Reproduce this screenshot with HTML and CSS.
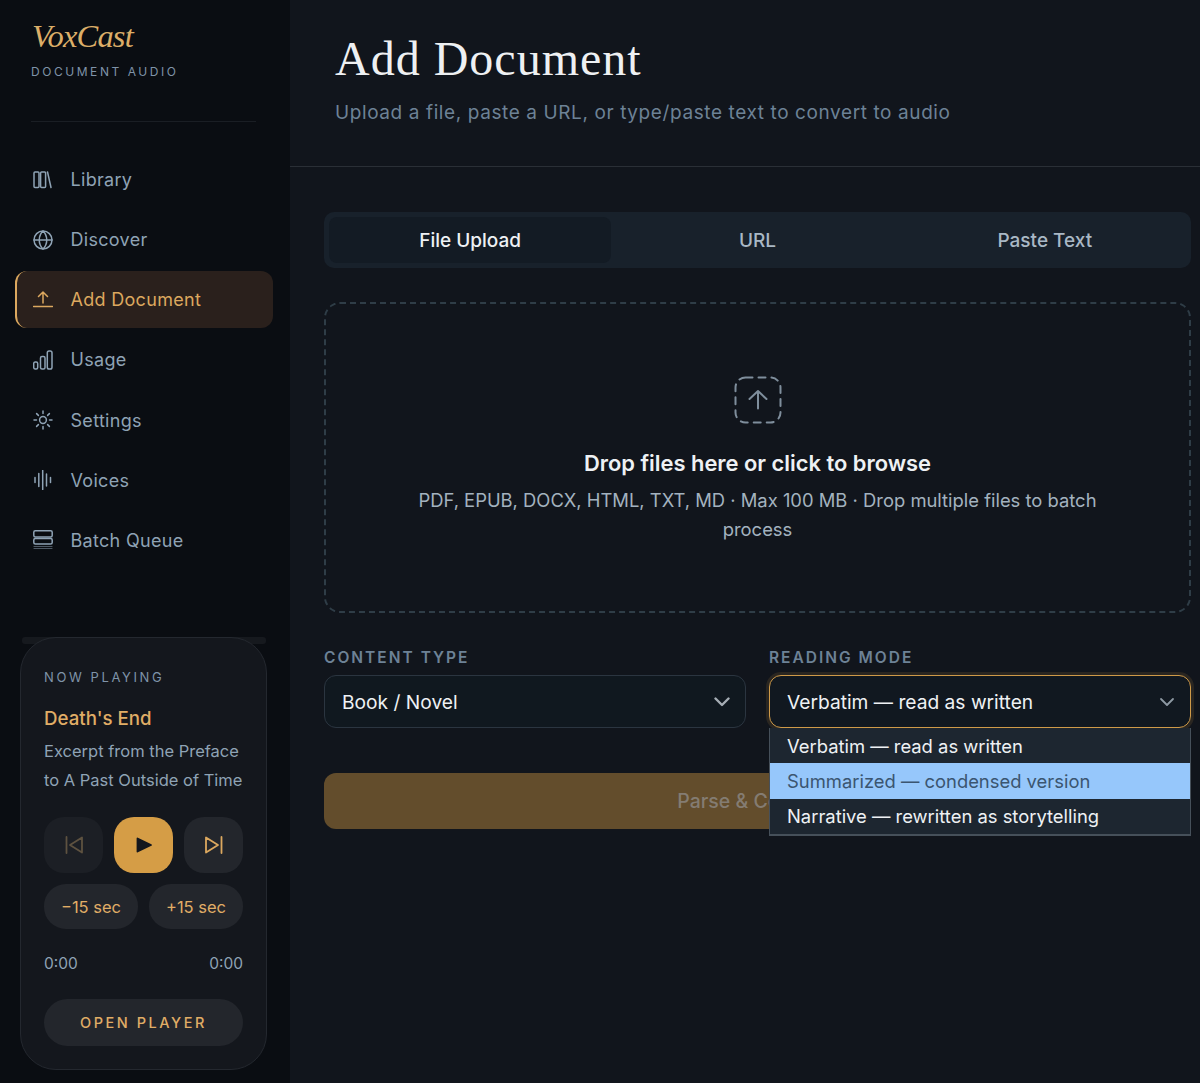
FILE: index.html
```html
<!DOCTYPE html>
<html lang="en">
<head>
<meta charset="utf-8">
<title>VoxCast</title>
<link rel="stylesheet" href="styles.css">
</head>
<body>
<div class="app">
  <aside class="sidebar">
    <div class="brand">
      <div class="logo">VoxCast</div>
      <div class="tagline">DOCUMENT AUDIO</div>
    </div>
    <nav class="nav">
      <a class="nav-item"><svg class="ico" viewBox="0 0 20 20"><rect x="1" y="2" width="5" height="15.5" rx="1"/><rect x="7.6" y="2" width="5" height="15.5" rx="1"/><path d="M14.5 2l3.5 15.5"/></svg><span>Library</span></a>
      <a class="nav-item"><svg class="ico" viewBox="0 0 20 20"><circle cx="10" cy="10" r="9"/><path d="M1 10h18M10 1c-5 5-5 13 0 18M10 1c5 5 5 13 0 18"/></svg><span>Discover</span></a>
      <a class="nav-item active"><svg class="ico" viewBox="0 0 20 20"><path d="M0.5 16.5h19M10 13V2M5.500 6.500L10 2l4.500 4.500"/></svg><span>Add Document</span></a>
      <a class="nav-item"><svg class="ico" viewBox="0 0 20 20"><rect x="0.700" y="12" width="4" height="7" rx="1.500"/><rect x="7.500" y="6.500" width="4.500" height="12.500" rx="1.500"/><rect x="14.300" y="1" width="4.700" height="18" rx="1.800"/></svg><span>Usage</span></a>
      <a class="nav-item"><svg class="ico" viewBox="0 0 20 20"><circle cx="10" cy="10" r="3.400"/><path d="M10 1v2.500M10 16.500V19M1 10h2.500M16.500 10H19M3.600 3.600l1.800 1.800M14.600 14.600l1.800 1.800M3.600 16.400l1.800-1.800M14.600 5.400l1.800-1.800"/></svg><span>Settings</span></a>
      <a class="nav-item"><svg class="ico" viewBox="0 0 20 20"><path d="M2 7.500v5M5.800 3.500v13M9.700 0.500v19M13.500 4v12M17.500 7.500v5"/></svg><span>Voices</span></a>
      <a class="nav-item"><svg class="ico" viewBox="0 0 20 20"><rect x="0.800" y="0.800" width="18.400" height="6.200" rx="1.500"/><rect x="0.800" y="8.500" width="18.400" height="5.500" rx="1.500"/><path class="faint" d="M1 16.500h18M1 18.500h18"/></svg><span>Batch Queue</span></a>
    </nav>
    <div class="player">
      <div class="np-label">NOW PLAYING</div>
      <div class="np-title">Death's End</div>
      <div class="np-sub">Excerpt from the Preface to A Past Outside of Time</div>
      <div class="transport">
        <button class="t-btn dim"><svg class="t-ico" viewBox="0 0 20 20"><path d="M2.500 2v16M18 2.500v15L6 10z"/></svg></button>
        <button class="t-btn play"><svg class="t-ico" viewBox="0 0 20 20"><path class="solid" d="M3.500 3.500l13.500 6.500-13.500 6.500z"/></svg></button>
        <button class="t-btn"><svg class="t-ico" viewBox="0 0 20 20"><path d="M17.500 2v16M2 2.500v15L14 10z"/></svg></button>
      </div>
      <div class="seek">
        <button class="pill">−15 sec</button>
        <button class="pill">+15 sec</button>
      </div>
      <div class="times"><span>0:00</span><span>0:00</span></div>
      <button class="open-player">OPEN PLAYER</button>
    </div>
  </aside>
  <main class="main">
    <header class="header">
      <h1 class="title">Add Document</h1>
      <p class="subtitle">Upload a file, paste a URL, or type/paste text to convert to audio</p>
    </header>
    <section class="content">
      <div class="tabs">
        <div class="tab active">File Upload</div>
        <div class="tab">URL</div>
        <div class="tab">Paste Text</div>
      </div>
      <div class="drop">
        <svg class="drop-ico" viewBox="0 0 48 48"><rect class="dash" x="1.500" y="1.500" width="45" height="45" rx="10"/><path d="M24 32.500V15M15.500 23L24 15l8.500 8"/></svg>
        <div class="drop-title">Drop files here or click to browse</div>
        <div class="drop-sub">PDF, EPUB, DOCX, HTML, TXT, MD · Max 100 MB · Drop multiple files to batch process</div>
      </div>
      <div class="fields">
        <div class="field">
          <div class="label">CONTENT TYPE</div>
          <div class="select"><span>Book / Novel</span><svg class="chev bold" viewBox="0 0 16 10"><path d="M1.500 1.500L8 8l6.500-6.500"/></svg></div>
        </div>
        <div class="field">
          <div class="label">READING MODE</div>
          <div class="select focus"><span>Verbatim — read as written</span><svg class="chev" viewBox="0 0 16 10"><path d="M2 2l6 6 6-6"/></svg></div>
          <div class="menu">
            <div class="opt">Verbatim — read as written</div>
            <div class="opt hl">Summarized — condensed version</div>
            <div class="opt">Narrative — rewritten as storytelling</div>
          </div>
        </div>
      </div>
      <button class="submit">Parse &amp; Continue</button>
    </section>
  </main>
</div>
</body>
</html>
```
FILE: styles.css
```css
* { box-sizing: border-box; }
html, body { margin: 0; height: 100%; }
body { background: #11151c; color: #e8ecf0; font-family: Inter, "Noto Sans", sans-serif; overflow: hidden; }
button { font-family: inherit; border: 0; cursor: pointer; }
.app { display: flex; height: 1083px; }

.sidebar { width: 290px; flex: none; background: #0a0d12; display: flex; flex-direction: column; padding: 0 17px 13px 14.500px; isolation: isolate; }
.brand { margin: 0 17px 0 16.500px; padding: 17px 0 42px; border-bottom: 1px solid #1a1e24; }
.logo { font-family: "Liberation Serif", serif; font-style: italic; font-size: 32.500px; line-height: 38px; color: #dcae68; letter-spacing: -0.8px; margin-left: 1px; }
.tagline { margin-top: 9px; font-size: 12px; line-height: 15px; letter-spacing: 2.550px; color: #7f93a8; }

.nav { display: flex; flex-direction: column; gap: 3.130px; margin-top: 29px; }
.nav-item { height: 57px; display: flex; align-items: center; gap: 17.500px; padding-left: 16.500px; border-radius: 12px; font-size: 18px; color: #8fa3b5; border-left: 2px solid transparent; letter-spacing: 0.3px; }
.nav-item.active { background: #2a201c; color: #dca85f; border-left-color: #dca85f; }
.ico { width: 20px; height: 20px; flex: none; fill: none; stroke: currentColor; stroke-width: 1.500; stroke-linecap: round; stroke-linejoin: round; }
.ico .faint { opacity: 0.5; stroke-width: 1.200; }

.player { margin: auto 6.500px 0 5.500px; width: 247px; height: 433px; padding: 31px 23px 0; background: #14171d; border: 1px solid #24282f; border-radius: 36px; display: flex; flex-direction: column; position: relative; }
.player::before { content: ""; position: absolute; left: 1px; right: 0; top: -1px; height: 7px; border-radius: 3px; background: #16191e; z-index: -1; }
.np-label { font-size: 13px; line-height: 16px; letter-spacing: 2.600px; color: #7f93a8; }
.np-title { margin-top: 21px; font-size: 18.700px; line-height: 26px; font-weight: 500; color: #e0ad66; }
.np-sub { margin-top: 5px; font-size: 16.500px; line-height: 28.500px; color: #8fa3b5; }
.transport { display: flex; justify-content: space-between; margin-top: 23px; }
.t-btn { width: 59px; height: 56px; border-radius: 20px; background: #23262c; color: #dca85f; display: flex; align-items: center; justify-content: center; padding: 0; }
.t-btn.dim { background: #1c1f25; color: #5e5240; }
.t-btn.play { background: #d59d46; color: #14171d; }
.t-ico { width: 20px; height: 20px; fill: none; stroke: currentColor; stroke-width: 1.800; stroke-linecap: round; stroke-linejoin: round; }
.t-ico .solid { fill: currentColor; }
.seek { display: flex; gap: 11px; margin-top: 11px; }
.pill { flex: 1; height: 45px; border-radius: 22px; background: #23262c; color: #e0ad66; font-size: 16.500px; padding: 0; }
.times { display: flex; justify-content: space-between; margin-top: 25px; font-size: 15.500px; line-height: 20px; color: #8fa3b5; }
.open-player { margin-top: 25px; height: 47px; border-radius: 24px; background: #23262c; color: #e0ad66; font-size: 14.500px; font-weight: 500; letter-spacing: 2.550px; padding: 0; }

.main { flex: 1; min-width: 0; display: flex; flex-direction: column; }
.header { padding: 30px 45px 37px; border-bottom: 1px solid #2a2f36; height: 167px; }
.title { margin: 0; font-family: "Liberation Serif", serif; font-weight: 400; font-size: 48px; line-height: 58px; color: #eef0f2; letter-spacing: 1px; }
.subtitle { margin: 12px 0 0; font-size: 19px; line-height: 26px; color: #6d8296; letter-spacing: 0.600px; }

.content { padding: 45px 9px 0 34px; display: flex; flex-direction: column; position: relative; }
.tabs { display: flex; gap: 5px; height: 56px; padding: 5px; background: #18212b; border-radius: 10px; }
.tab { flex: 1; display: flex; align-items: center; justify-content: center; border-radius: 8px; font-size: 19px; font-weight: 500; color: #a9b8c5; }
.tab.active { background: #131b24; color: #eef1f4; }
.drop { margin-top: 34px; height: 311px; padding-top: 72px; border: 2px dashed #2f3d47; border-radius: 16px; display: flex; flex-direction: column; align-items: center; text-align: center; }
.drop-ico { width: 48px; height: 48px; fill: none; stroke: #7f8e9c; stroke-width: 2; stroke-linecap: round; stroke-linejoin: round; }
.drop-ico .dash { stroke-dasharray: 7 6; }
.drop-title { margin-top: 24px; font-size: 21.900px; line-height: 30px; font-weight: 600; color: #eef1f4; }
.drop-sub { margin-top: 8px; width: 700px; font-size: 18.400px; line-height: 29px; color: #a3b2bf; }
.fields { display: grid; grid-template-columns: 1fr 1fr; gap: 23px; margin-top: 35px; }
.field { position: relative; }
.label { font-size: 15.500px; line-height: 20px; font-weight: 600; letter-spacing: 2px; color: #6d8296; }
.select { margin-top: 7px; height: 53px; display: flex; align-items: center; justify-content: space-between; padding: 0 15px 0 17px; background: #10181f; border: 1px solid #2b3540; border-radius: 12px; font-size: 19.200px; color: #eef1f4; }
.select.focus { border-color: #cf9a48; box-shadow: 0 0 0 3px #2a2621; background: #111820; }
.chev { width: 16px; height: 10px; fill: none; stroke: #8e99a3; stroke-width: 1.800; stroke-linecap: round; stroke-linejoin: round; }
.chev.bold { stroke-width: 2.400; stroke: #a5adb4; }
.menu { position: absolute; left: 0; right: 0; top: 80px; z-index: 2; height: 108px; background: #1d2630; border: 1px solid #46505a; border-top: 0; border-bottom-width: 2px; }
.opt { height: 35.300px; display: flex; align-items: center; padding-left: 17px; font-size: 18.400px; color: #eef1f4; }
.opt.hl { background: #96c7fb; color: #3b5570; }
.submit { margin-top: 45px; height: 56px; border-radius: 12px; background: #634d2c; color: #847c72; font-size: 19.500px; font-weight: 500; }
```
